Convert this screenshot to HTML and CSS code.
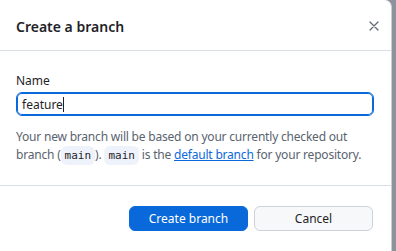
FILE: index.html
```html
<!DOCTYPE html>
<html lang="en">
<head>
  <meta charset="UTF-8">
  <title>Create a branch</title>
  <link rel="stylesheet" href="styles.css">
</head>
<body>
  <div class="backdrop">
    <div class="strip">
      <div class="strip-left"></div>
      <div class="strip-right"></div>
    </div>
    <div class="dialog">
      <div class="dialog-header">
        <h1 class="dialog-title">Create a branch</h1>
        <button class="close-btn" aria-label="Close">
          <svg width="16" height="16" viewBox="0 0 16 16"><path d="M4 4l8 8M12 4l-8 8" stroke="#636c76" stroke-width="1.3" stroke-linecap="round"/></svg>
        </button>
      </div>
      <div class="dialog-body">
        <label class="field-label" for="branchName">Name</label>
        <div class="field-input"><span class="field-value">feature</span><span class="caret"></span></div>
        <p class="help"><span>Your new branch will be based on your currently checked out</span> <span>branch (<code>main</code>). <code>main</code> is the <a href="#">default branch</a> for your repository.</span></p>
      </div>
      <div class="dialog-footer">
        <button class="btn btn-primary">Create branch</button>
        <button class="btn">Cancel</button>
      </div>
    </div>
  </div>
</body>
</html>
```
FILE: styles.css
```css
html, body {
  margin: 0;
  padding: 0;
  height: 100%;
  overflow: hidden;
}

body {
  background-color: #8e939b;
  font-family: "Noto Sans", "Open Sans", sans-serif;
  color: #1f2328;
}

.backdrop {
  display: flex;
  flex-direction: column;
  height: 100%;
}

.strip {
  display: flex;
  height: 3px;
}

.strip-left {
  width: 83px;
  background-color: #9a9a9a;
  border-right: 1px solid #6f7680;
}

.strip-right {
  flex: 1;
  background-color: #8e939b;
}

.dialog {
  flex: 1;
  margin-right: 4px;
  background-color: #fff;
  border-top-right-radius: 7px;
  border-right: 1px solid #c9ced4;
  display: flex;
  flex-direction: column;
}

.dialog-header {
  display: flex;
  align-items: center;
  justify-content: space-between;
  height: 50px;
  padding: 0 5px 0 16px;
  border-bottom: 1px solid #d8dee4;
}

.dialog-title {
  margin: 0;
  font-size: 14px;
  font-weight: 600;
  padding-top: 2px;
}

.close-btn {
  border: none;
  background: none;
  padding: 0;
  margin-top: 1px;
  width: 24px;
  height: 24px;
  display: flex;
  align-items: center;
  justify-content: center;
}

.dialog-body {
  padding: 21px 17px 20px 16px;
  border-bottom: 1px solid #d8dee4;
}

.field-label {
  display: block;
  font-size: 12px;
  line-height: 18px;
  margin-bottom: 2px;
}

.field-input {
  height: 22px;
  border: 1px solid #0969da;
  box-shadow: inset 0 0 0 1px #0969da;
  border-radius: 6px;
  display: flex;
  align-items: center;
  padding: 0 5px;
  font-size: 12px;
}

.caret {
  width: 1px;
  height: 15px;
  background-color: #1f2328;
}

.help {
  margin: 12px 0 0;
  font-size: 12px;
  line-height: 18px;
  letter-spacing: -0.2px;
  color: #59636e;
}

.help code {
  font-family: "DejaVu Sans Mono", monospace;
  font-size: 11px;
  letter-spacing: 0;
  color: #1f2328;
  background-color: #eef3fb;
  border-radius: 6px;
  padding: 3px 4px;
}

.help a {
  color: #0969da;
}

.dialog-footer {
  display: flex;
  justify-content: flex-end;
  gap: 6px;
  padding: 20px 18px;
}

.btn {
  width: 119px;
  height: 25px;
  border: 1px solid #cdd2d8;
  border-radius: 6px;
  background-color: #f6f8fa;
  color: #1f2328;
  font-family: inherit;
  font-size: 12px;
  padding: 0;
}

.btn-primary {
  background-color: #0969da;
  border-color: #0969da;
  color: #fff;
}
```
